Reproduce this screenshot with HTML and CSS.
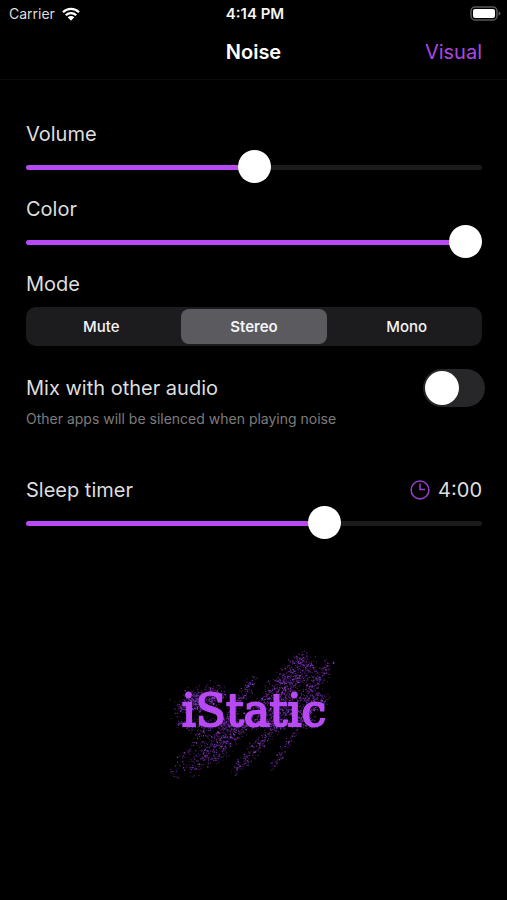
FILE: index.html
```html
<!DOCTYPE html>
<html lang="en">
<head>
<meta charset="utf-8">
<meta name="viewport" content="width=device-width, initial-scale=1">
<title>iStatic – Noise</title>
<link rel="stylesheet" href="styles.css">
</head>
<body>
<div class="status">
  <div class="status-left">
    <span>Carrier</span>
    <svg class="wifi" viewBox="0 0 18 14" aria-hidden="true">
      <path d="M1 5.2a11.4 11.4 0 0 1 16 0M3.8 8.2a7.4 7.4 0 0 1 10.4 0" fill="none" stroke="#fff" stroke-width="2.3"/>
      <path d="M5.7 10.3a4.7 4.7 0 0 1 6.6 0L9 13.7z" fill="#fff"/>
    </svg>
  </div>
  <time class="clock">4:14 PM</time>
  <div class="status-right">
    <svg class="battery" viewBox="0 0 31 16" role="img" aria-label="Battery full">
      <rect x="1" y="1" width="26" height="13" rx="4" fill="none" stroke="#5a5a5c" stroke-width="1.5"/>
      <rect x="3" y="3" width="22" height="9" rx="2" fill="#fff"/>
      <path d="M28.6 5.2c1.3.5 1.9 1.3 1.9 2.3s-.6 1.800-1.900 2.300z" fill="#5a5a5c"/>
    </svg>
  </div>
</div>
<header class="nav">
  <h1>Noise</h1>
  <a class="nav-link" href="#visual">Visual</a>
</header>
<main class="settings">
  <div class="field">
    <label for="volume">Volume</label>
    <input class="slider half" id="volume" type="range" min="0" max="100" value="50">
  </div>
  <div class="field">
    <label for="color">Color</label>
    <input class="slider full" id="color" type="range" min="0" max="100" value="100">
  </div>
  <fieldset class="mode">
    <legend>Mode</legend>
    <div class="segments">
      <label><input type="radio" name="mode" value="mute"><span>Mute</span></label>
      <label><input type="radio" name="mode" value="stereo" checked><span>Stereo</span></label>
      <label><input type="radio" name="mode" value="mono"><span>Mono</span></label>
    </div>
  </fieldset>
  <div class="mix">
    <div class="mix-row">
      <label for="mix">Mix with other audio</label>
      <input class="switch" id="mix" type="checkbox" aria-describedby="mix-note">
    </div>
    <p class="note" id="mix-note">Other apps will be silenced when playing noise</p>
  </div>
  <div class="field">
    <div class="timer-row">
      <label for="timer">Sleep timer</label>
      <output class="timer-value" for="timer">
        <svg class="timer-icon" viewBox="0 0 20 20" aria-hidden="true">
          <circle cx="10" cy="10" r="8.900"/>
          <path d="M10 3.500v6h5"/>
        </svg>
        <span>4:00</span>
      </output>
    </div>
    <input class="slider two-thirds" id="timer" type="range" min="0" max="6" step="0.5" value="4">
  </div>
  <div class="logo">
    <canvas id="dust" width="190" height="150" aria-hidden="true"></canvas>
    <span>iStatic</span>
  </div>
</main>
<script src="dust.js"></script>
</body>
</html>
```

FILE: styles.css
```css
* {
  box-sizing: border-box;
}

:root {
  --accent: #b84af5;
  --text: #dedede;
  --thumb: 33px;
}

body {
  margin: 0;
  min-height: 100vh;
  background: #000;
  color: var(--text);
  font-family: Inter, "Liberation Sans", sans-serif;
  font-size: 20px;
  line-height: 26px;
}

.status {
  display: grid;
  grid-template-columns: 1fr auto 1fr;
  align-items: center;
  height: 27px;
  padding: 0 6px 0 9px;
  font-size: 14px;
  line-height: 18px;
}

.status-left {
  display: flex;
  align-items: center;
  gap: 7px;
}

.wifi {
  width: 18px;
  height: 14px;
}

.clock {
  color: #f4f4f4;
  font-size: 15px;
  font-weight: 600;
}

.status-right {
  display: flex;
  justify-content: flex-end;
}

.battery {
  width: 31px;
  height: 16px;
}

.nav {
  display: grid;
  grid-template-columns: 1fr auto 1fr;
  align-items: center;
  height: 53px;
  padding: 0 25px 2px;
  border-bottom: 1px solid #0c0c0c;
}

.nav h1 {
  grid-column: 2;
  margin: 0;
  color: #fff;
  font-size: 20px;
  font-weight: 600;
}

.nav-link {
  justify-self: end;
  color: #ab47e0;
  text-decoration: none;
}

.settings {
  padding: 41px 25px 0 26px;
}

.field {
  margin-bottom: 12px;
}

.field label {
  display: block;
}

.slider {
  --fill: calc(var(--thumb) / 2 + (100% - var(--thumb)) * var(--value));
  display: block;
  width: 100%;
  height: var(--thumb);
  margin: 4px 0 0;
  appearance: none;
  background: none;
}

.half {
  --value: 0.5;
}

.full {
  --value: 1;
}

.two-thirds {
  --value: 0.667;
}

.slider::-webkit-slider-runnable-track {
  height: 5px;
  border-radius: 3px;
  background: linear-gradient(to right, var(--accent) var(--fill), #1b1b1c var(--fill));
}

.slider::-webkit-slider-thumb {
  width: var(--thumb);
  height: var(--thumb);
  margin-top: -15px;
  appearance: none;
  border-radius: 50%;
  background: #fff;
}

.mode {
  margin: 0;
  padding: 0;
  border: 0;
}

.mode legend {
  padding: 0;
}

.segments {
  display: grid;
  grid-template-columns: repeat(3, 1fr);
  gap: 6px;
  margin-top: 10px;
  padding: 2px;
  border-radius: 10px;
  background: #1c1c1e;
  color: #f4f4f4;
  font-size: 15px;
  font-weight: 500;
  text-align: center;
}

.segments input {
  position: absolute;
  opacity: 0;
}

.segments span {
  display: block;
  border-radius: 8px;
  line-height: 35px;
}

.segments input:checked + span {
  background: #5b5b5f;
  font-weight: 600;
}

.mix {
  margin: 23px 0 48px;
}

.mix-row {
  display: flex;
  align-items: center;
  justify-content: space-between;
  margin-right: -3px;
}

.switch {
  width: 62px;
  height: 38px;
  margin: 0;
  padding: 2px;
  appearance: none;
  border-radius: 19px;
  background: #272729;
}

.switch::before {
  content: "";
  display: block;
  width: 34px;
  height: 34px;
  border-radius: 50%;
  background: #fff;
}

.switch:checked {
  background: var(--accent);
}

.switch:checked::before {
  margin-left: auto;
}

.note {
  margin: 2px 0 0;
  color: #7c7c7c;
  font-size: 14px;
  line-height: 20px;
}

.timer-row,
.timer-value {
  display: flex;
  align-items: center;
  justify-content: space-between;
  gap: 8px;
}

.timer-icon {
  width: 20px;
  height: 20px;
  fill: none;
  stroke: #9a3fca;
  stroke-width: 1.5;
}

.logo {
  display: grid;
  place-items: center;
  margin-top: 100px;
}

.logo canvas,
.logo span {
  grid-area: 1 / 1;
}

.logo span {
  padding-bottom: 8px;
  color: var(--accent);
  font-family: "DejaVu Serif", serif;
  font-size: 44px;
  line-height: 50px;
  -webkit-text-stroke: 2px var(--accent);
}
```

FILE: dust.js
```javascript
// Scatters the static behind the logo along diagonal streaks.
const ctx = document.getElementById("dust").getContext("2d");
let seed = 7;
function random() {
  seed = (seed * 16807) % 2147483647;
  return seed / 2147483647;
}
function spread() {
  return random() + random() + random() - 1.5;
}
const colors = ["#b84af5", "#9a45e6", "#6848d0", "#7a2ab0", "#5a2296", "#a02cae"];

// x1, y1, x2, y2, width, particle count
const streaks = [
  [14, 134, 50, 80, 5, 110],
  [32, 130, 78, 72, 9, 330],
  [52, 120, 92, 76, 9, 290],
  [75, 131, 130, 70, 7, 270],
  [112, 129, 140, 85, 4, 90],
  [70, 75, 96, 38, 6, 170],
  [92, 75, 145, 15, 9, 480],
  [110, 78, 152, 22, 10, 480],
  [130, 75, 170, 24, 8, 320],
  [20, 70, 40, 52, 9, 220],
  [35, 65, 60, 52, 12, 400],
  [20, 84, 155, 82, 8, 560],
  [143, 78, 163, 56, 9, 260]
];
for (const [x1, y1, x2, y2, width, count] of streaks) {
  for (let i = 0; i < count; i++) {
    const t = random();
    ctx.globalAlpha = 0.35 + random() * 0.6;
    ctx.fillStyle = colors[Math.floor(random() * colors.length)];
    const size = random() < 0.12 ? 1.4 : 0.9;
    ctx.fillRect(x1 + (x2 - x1) * t + spread() * width, y1 + (y2 - y1) * t + spread() * width * 0.8, size, size);
  }
}
```
